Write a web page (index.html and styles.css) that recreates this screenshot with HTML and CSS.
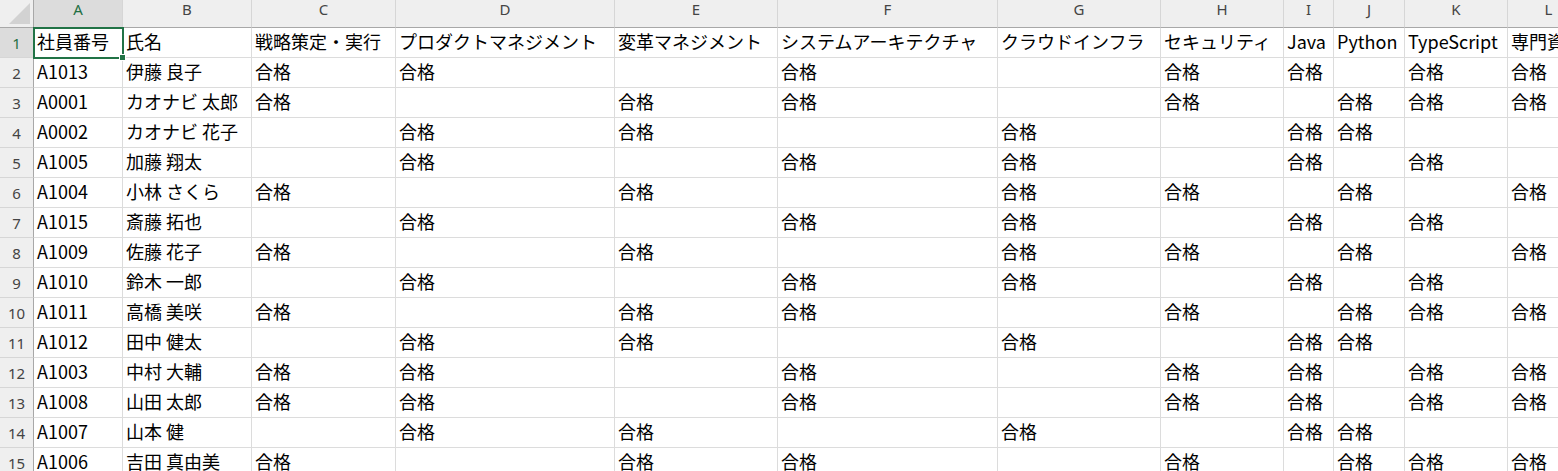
FILE: index.html
```html
<!DOCTYPE html>
<html lang="ja">
<head>
<meta charset="utf-8">
<title>資格一覧</title>
<link rel="stylesheet" href="styles.css">
</head>
<body>
<div class="sheet">
  <!-- column headings -->
  <div class="corner"></div>
  <div class="ch ch-active">A</div>
  <div class="ch">B</div>
  <div class="ch">C</div>
  <div class="ch">D</div>
  <div class="ch">E</div>
  <div class="ch">F</div>
  <div class="ch">G</div>
  <div class="ch">H</div>
  <div class="ch">I</div>
  <div class="ch">J</div>
  <div class="ch">K</div>
  <div class="ch">L</div>

  <!-- row 1: field names -->
  <div class="rh rh-active">1</div>
  <div class="c sel">社員番号</div>
  <div class="c">氏名</div>
  <div class="c">戦略策定・実行</div>
  <div class="c">プロダクトマネジメント</div>
  <div class="c">変革マネジメント</div>
  <div class="c">システムアーキテクチャ</div>
  <div class="c">クラウドインフラ</div>
  <div class="c">セキュリティ</div>
  <div class="c">Java</div>
  <div class="c">Python</div>
  <div class="c">TypeScript</div>
  <div class="c">専門資格</div>

  <div class="rh">2</div>
  <div class="c">A1013</div><div class="c">伊藤 良子</div>
  <div class="c">合格</div><div class="c">合格</div><div class="c"></div><div class="c">合格</div><div class="c"></div>
  <div class="c">合格</div><div class="c">合格</div><div class="c"></div><div class="c">合格</div><div class="c">合格</div>

  <div class="rh">3</div>
  <div class="c">A0001</div><div class="c">カオナビ 太郎</div>
  <div class="c">合格</div><div class="c"></div><div class="c">合格</div><div class="c">合格</div><div class="c"></div>
  <div class="c">合格</div><div class="c"></div><div class="c">合格</div><div class="c">合格</div><div class="c">合格</div>

  <div class="rh">4</div>
  <div class="c">A0002</div><div class="c">カオナビ 花子</div>
  <div class="c"></div><div class="c">合格</div><div class="c">合格</div><div class="c"></div><div class="c">合格</div>
  <div class="c"></div><div class="c">合格</div><div class="c">合格</div><div class="c"></div><div class="c"></div>

  <div class="rh">5</div>
  <div class="c">A1005</div><div class="c">加藤 翔太</div>
  <div class="c"></div><div class="c">合格</div><div class="c"></div><div class="c">合格</div><div class="c">合格</div>
  <div class="c"></div><div class="c">合格</div><div class="c"></div><div class="c">合格</div><div class="c"></div>

  <div class="rh">6</div>
  <div class="c">A1004</div><div class="c">小林 さくら</div>
  <div class="c">合格</div><div class="c"></div><div class="c">合格</div><div class="c"></div><div class="c">合格</div>
  <div class="c">合格</div><div class="c"></div><div class="c">合格</div><div class="c"></div><div class="c">合格</div>

  <div class="rh">7</div>
  <div class="c">A1015</div><div class="c">斎藤 拓也</div>
  <div class="c"></div><div class="c">合格</div><div class="c"></div><div class="c">合格</div><div class="c">合格</div>
  <div class="c"></div><div class="c">合格</div><div class="c"></div><div class="c">合格</div><div class="c"></div>

  <div class="rh">8</div>
  <div class="c">A1009</div><div class="c">佐藤 花子</div>
  <div class="c">合格</div><div class="c"></div><div class="c">合格</div><div class="c"></div><div class="c">合格</div>
  <div class="c">合格</div><div class="c"></div><div class="c">合格</div><div class="c"></div><div class="c">合格</div>

  <div class="rh">9</div>
  <div class="c">A1010</div><div class="c">鈴木 一郎</div>
  <div class="c"></div><div class="c">合格</div><div class="c"></div><div class="c">合格</div><div class="c">合格</div>
  <div class="c"></div><div class="c">合格</div><div class="c"></div><div class="c">合格</div><div class="c"></div>

  <div class="rh">10</div>
  <div class="c">A1011</div><div class="c">高橋 美咲</div>
  <div class="c">合格</div><div class="c"></div><div class="c">合格</div><div class="c">合格</div><div class="c"></div>
  <div class="c">合格</div><div class="c"></div><div class="c">合格</div><div class="c">合格</div><div class="c">合格</div>

  <div class="rh">11</div>
  <div class="c">A1012</div><div class="c">田中 健太</div>
  <div class="c"></div><div class="c">合格</div><div class="c">合格</div><div class="c"></div><div class="c">合格</div>
  <div class="c"></div><div class="c">合格</div><div class="c">合格</div><div class="c"></div><div class="c"></div>

  <div class="rh">12</div>
  <div class="c">A1003</div><div class="c">中村 大輔</div>
  <div class="c">合格</div><div class="c">合格</div><div class="c"></div><div class="c">合格</div><div class="c"></div>
  <div class="c">合格</div><div class="c">合格</div><div class="c"></div><div class="c">合格</div><div class="c">合格</div>

  <div class="rh">13</div>
  <div class="c">A1008</div><div class="c">山田 太郎</div>
  <div class="c">合格</div><div class="c">合格</div><div class="c"></div><div class="c">合格</div><div class="c"></div>
  <div class="c">合格</div><div class="c">合格</div><div class="c"></div><div class="c">合格</div><div class="c">合格</div>

  <div class="rh">14</div>
  <div class="c">A1007</div><div class="c">山本 健</div>
  <div class="c"></div><div class="c">合格</div><div class="c">合格</div><div class="c"></div><div class="c">合格</div>
  <div class="c"></div><div class="c">合格</div><div class="c">合格</div><div class="c"></div><div class="c"></div>

  <div class="rh">15</div>
  <div class="c">A1006</div><div class="c">吉田 真由美</div>
  <div class="c">合格</div><div class="c"></div><div class="c">合格</div><div class="c">合格</div><div class="c"></div>
  <div class="c">合格</div><div class="c"></div><div class="c">合格</div><div class="c">合格</div><div class="c">合格</div>
</div>
</body>
</html>
```

FILE: styles.css
```css
html, body {
  margin: 0;
  padding: 0;
  overflow: hidden;
  background: #ffffff;
}

.sheet {
  display: grid;
  grid-template-columns: 34px 89px 129px 144px 219px 163px 220px 163px 123px 50px 71px 103px 82px;
  grid-template-rows: 28px;
  grid-auto-rows: 30px;
  width: max-content;
}

/* top-left select-all box */
.corner {
  position: relative;
  background: #efefef;
  border-right: 1px solid #a8a8a8;
  border-bottom: 1px solid #a8a8a8;
  box-sizing: border-box;
}
.corner::after {
  content: "";
  position: absolute;
  left: 9px;
  top: 3px;
  width: 21px;
  height: 21px;
  background: #d2d2d2;
  clip-path: polygon(100% 0, 100% 100%, 0 100%);
}

/* column letters */
.ch {
  box-sizing: border-box;
  background: #efefef;
  border-right: 1px solid #d6d6d6;
  border-bottom: 1px solid #a8a8a8;
  display: flex;
  justify-content: center;
  align-items: flex-start;
  padding-top: 1px;
  font: 15px/16px "Noto Sans", "Open Sans", sans-serif;
  color: #444444;
}
.ch-active {
  background: #dcdcdc;
  color: #1f6f43;
}

/* row numbers */
.rh {
  box-sizing: border-box;
  background: #efefef;
  border-right: 1px solid #a8a8a8;
  border-bottom: 1px solid #d6d6d6;
  display: flex;
  justify-content: center;
  align-items: center;
  font: 15px/18px "Noto Sans", "Open Sans", sans-serif;
  color: #444444;
}
.rh-active {
  background: #dcdcdc;
  color: #1f6f43;
}

/* data cells */
.c {
  box-sizing: border-box;
  border-right: 1px solid #dcdcdc;
  border-bottom: 1px solid #dcdcdc;
  padding: 0 3px 3px 3px;
  display: flex;
  align-items: center;
  font: 18px/18px "Noto Sans CJK JP", "Noto Sans", sans-serif;
  color: #000000;
  white-space: nowrap;
  overflow: hidden;
}

/* active cell outline with fill handle */
.sel {
  position: relative;
  overflow: visible;
}
.sel::before {
  content: "";
  position: absolute;
  left: -1px;
  top: -1px;
  width: 91px;
  height: 32px;
  border: 2px solid #217346;
  box-sizing: border-box;
  z-index: 1;
}
.sel::after {
  content: "";
  position: absolute;
  left: 85px;
  top: 26px;
  width: 5px;
  height: 5px;
  background: #217346;
  border: 1px solid #ffffff;
  z-index: 2;
}
```
